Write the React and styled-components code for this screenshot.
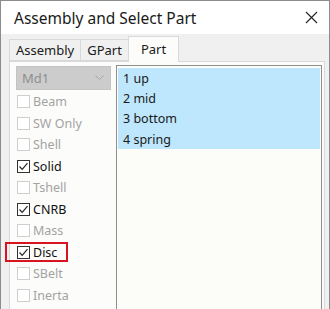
import styled, { createGlobalStyle } from "styled-components";

const Global = createGlobalStyle`
  html, body { margin: 0; padding: 0; background: #ffffff; }
  body { font-family: "Noto Sans", "Open Sans", sans-serif; }
`;

const Window = styled.div`
  width: 328px;
  height: 309px;
  border: 1px solid #8c8c8c;
  border-bottom: none;
  background: #f0f0f0;
  display: flex;
  flex-direction: column;
  overflow: hidden;
`;

const TitleBar = styled.div`
  height: 33px;
  background: #ffffff;
  display: flex;
  align-items: center;
  justify-content: space-between;
  padding: 0 10px 0 13px;
`;

const Title = styled.div`
  font-size: 15.5px;
  color: #1a1a1a;
`;

const Close = styled.div`
  width: 16px;
  height: 16px;
  display: flex;
  align-items: center;
  justify-content: center;
`;

const Tabs = styled.div`
  display: flex;
  align-items: flex-end;
  height: 27px;
  padding-left: 9px;
  position: relative;
  z-index: 1;
`;

const Tab = styled.div`
  height: ${p => (p.active ? "26px" : "22px")};
  box-sizing: border-box;
  padding: ${p => (p.active ? "0 12px 2px" : "0 6px")};
  background: ${p => (p.active ? "#fcfcfa" : "#f0f0f0")};
  border: 1px solid #d9d9d9;
  border-bottom: ${p => (p.active ? "none" : "1px solid #d9d9d9")};
  margin-left: -1px;
  margin-bottom: ${p => (p.active ? "-1px" : "0")};
  display: flex;
  align-items: center;
  font-size: 13px;
  color: #1a1a1a;
`;

const Panel = styled.div`
  flex: 1;
  margin: 0 4px 0 8px;
  background: #fcfcfa;
  border: 1px solid #d9d9d9;
  border-bottom: none;
  display: flex;
  padding: 3px 2px 0 6px;
  gap: 5px;
`;

const Side = styled.div`
  width: 95px;
  display: flex;
  flex-direction: column;
`;

const Combo = styled.div`
  margin-top: 1px;
  height: 24px;
  box-sizing: border-box;
  background: #cccccc;
  border: 1px solid #c4c4c4;
  display: flex;
  align-items: center;
  justify-content: space-between;
  padding: 0 6px 0 5px;
  font-size: 13px;
  color: #8e8e8e;
  margin-bottom: 1px;
`;

const Row = styled.div`
  position: relative;
  height: 21.5px;
  display: flex;
  align-items: center;
  gap: 3px;
  padding-left: 1px;
  font-size: 12.5px;
  color: ${p => (p.checked ? "#111111" : "#a3a3a3")};
`;

const Box = styled.div`
  width: 13px;
  height: 13px;
  box-sizing: border-box;
  border: 1px solid ${p => (p.checked ? "#333333" : "#cfcfcf")};
  background: #ffffff;
  display: flex;
  align-items: center;
  justify-content: center;
`;

const Mark = styled.div`
  position: absolute;
  left: -11px;
  top: 0;
  width: 63px;
  height: 20px;
  box-sizing: border-box;
  border: 2px solid #d7141f;
`;

const List = styled.div`
  flex: 1;
  border: 1px solid #8f8f8f;
  border-bottom: none;
  background: #fcfdf8;
  padding: 2px 1px 0 1px;
`;

const Item = styled.div`
  height: 20.3px;
  display: flex;
  align-items: center;
  padding-left: 5px;
  background: #bee6fd;
  font-size: 12.5px;
  color: #1a1a1a;
`;

const checks = [
  ["Beam", false],
  ["SW Only", false],
  ["Shell", false],
  ["Solid", true],
  ["Tshell", false],
  ["CNRB", true],
  ["Mass", false],
  ["Disc", true, true],
  ["SBelt", false],
  ["Inerta", false],
];

const parts = ["1 up", "2 mid", "3 bottom", "4 spring"];

export default function App() {
  return (
    <>
      <Global />
      <Window>
        <TitleBar>
          <Title>Assembly and Select Part</Title>
          <Close>
            <svg width="13" height="13" viewBox="0 0 13 13">
              <path d="M1 1 L12 12 M12 1 L1 12" stroke="#222" strokeWidth="1.1" />
            </svg>
          </Close>
        </TitleBar>
        <Tabs>
          <Tab>Assembly</Tab>
          <Tab>GPart</Tab>
          <Tab active>Part</Tab>
        </Tabs>
        <Panel>
          <Side>
            <Combo>
              Md1
              <svg width="9" height="6" viewBox="0 0 9 6">
                <path d="M0.5 0.5 L4.5 4.5 L8.5 0.5" fill="none" stroke="#a8a8a8" strokeWidth="1" />
              </svg>
            </Combo>
            {checks.map(([label, checked, marked]) => (
              <Row key={label} checked={checked}>
                <Box checked={checked}>
                  {checked && (
                    <svg width="11" height="11" viewBox="0 0 11 11">
                      <path d="M1.5 5.5 L4.2 8.3 L9.5 2.2" fill="none" stroke="#222" strokeWidth="1.2" />
                    </svg>
                  )}
                </Box>
                {label}
                {marked && <Mark />}
              </Row>
            ))}
          </Side>
          <List>
            {parts.map(p => (
              <Item key={p}>{p}</Item>
            ))}
          </List>
        </Panel>
      </Window>
    </>
  );
}
